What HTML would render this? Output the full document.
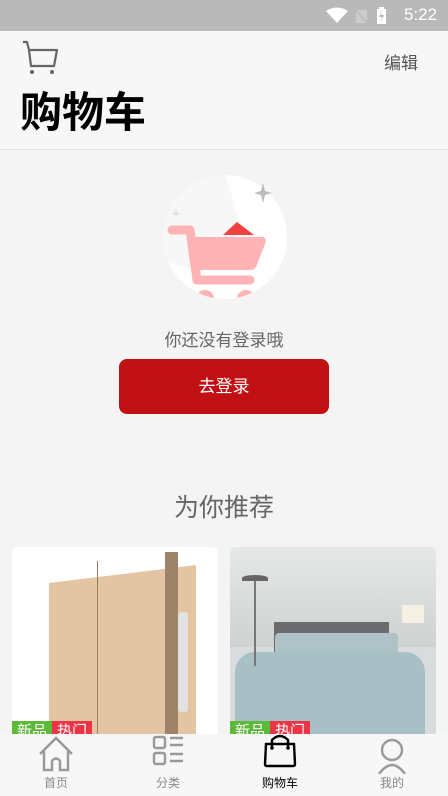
<!DOCTYPE html>
<html><head><meta charset="utf-8"><style>
*{margin:0;padding:0;box-sizing:border-box}
body{width:448px;height:796px;overflow:hidden;background:#f4f4f4;font-family:"Liberation Sans","Noto Sans CJK SC",sans-serif;position:relative}
.abs{position:absolute}
</style></head><body>
<div class="abs" style="left:0;top:0;width:448px;height:31px;background:#b9b9b9"></div>
<svg class="abs" style="left:320px;top:5px" width="120" height="22" viewBox="0 0 120 22">
<path d="M6 6 Q17 -1 28 6 L17 18 Z" fill="#fff"/>
<rect x="36" y="5" width="11" height="13" fill="#ccc"/><line x1="35" y1="4" x2="48" y2="19" stroke="#b9b9b9" stroke-width="1.5"/>
<rect x="57" y="4" width="9" height="15" fill="#fff"/><rect x="59" y="2" width="5" height="2" fill="#fff"/><path d="M62 6 L59 12 L62 12 L61 17 L64 10 L61 10 Z" fill="#b9b9b9"/>
</svg>
<div class="abs" style="left:404px;top:5px;color:#fff;font-size:17px">5:22</div>
<div class="abs" style="left:0;top:31px;width:448px;height:119px;background:#f7f7f7;border-bottom:1px solid #e2e2e2"></div>
<svg class="abs" style="left:20px;top:40px" width="40" height="36" viewBox="0 0 40 36">
<path d="M3 2 L7 2 L9 10 L11 26 L34 26 L37 10 L9 10" fill="none" stroke="#666" stroke-width="2.2" stroke-linejoin="round"/>
<circle cx="12" cy="32" r="2" fill="#666"/><circle cx="32" cy="32" r="2" fill="#666"/></svg>
<div class="abs" style="left:384px;top:49px;font-size:17px;color:#555">编辑</div>
<div class="abs" style="left:20px;top:88px;font-size:42px;font-weight:bold;color:#000;line-height:50px">购物车</div>
<svg class="abs" style="left:150px;top:165px" width="150" height="140" viewBox="0 0 150 140">
<defs><clipPath id="c"><circle cx="75" cy="72" r="62"/></clipPath></defs>
<circle cx="75" cy="72" r="62" fill="#fff"/>
<path d="M113 18 L115 26 L122 28 L115 30 L113 38 L111 30 L104 28 L111 26Z" fill="#bbb"/>
<path d="M26 43 L27 47 L31 49 L27 50 L26 54 L25 50 L21 49 L25 47Z" fill="#bbb"/>
<g clip-path="url(#c)">
<path d="M75 10 A62 62 0 0 0 16 95 Q40 110 75 98 Q95 70 85 45 Q80 20 75 10Z" fill="#f4f4f4" opacity="0.7"/>
<path d="M73 70 L87 57 L104 70Z" fill="#f04040"/>
<path d="M22 65 L40 65 L47 115 L100 115" fill="none" stroke="#ffb3b5" stroke-width="9" stroke-linecap="round" stroke-linejoin="round"/>
<path d="M42 72 L113 72 Q117 73 115 79 L106 102 Q104 105 100 105 L46 105Z" fill="#ffb3b5"/>
<circle cx="55" cy="134" r="9" fill="#ffb3b5"/><circle cx="96" cy="134" r="9" fill="#ffb3b5"/>
</g>
</svg>
<div class="abs" style="left:0;top:326px;width:448px;text-align:center;font-size:17px;color:#666">你还没有登录哦</div>
<div class="abs" style="left:119px;top:359px;width:210px;height:55px;background:#c01014;border-radius:8px;color:#fff;font-size:17px;text-align:center;line-height:55px">去登录</div>
<div class="abs" style="left:0;top:488px;width:448px;text-align:center;font-size:25px;color:#666">为你推荐</div>
<div class="abs" style="left:12px;top:547px;width:206px;height:200px;background:#fff;border-radius:6px;overflow:hidden">
<div class="abs" style="left:37px;top:18px;width:147px;height:180px;background:#e3c4a3;transform:skewY(-7deg);transform-origin:right top"></div>
<div class="abs" style="left:85px;top:14px;width:1px;height:180px;background:#9a7d60"></div>
<div class="abs" style="left:153px;top:5px;width:13px;height:190px;background:#9e8368"></div>
<div class="abs" style="left:166px;top:65px;width:10px;height:100px;background:#e2e2e2;border-radius:3px"></div>
</div>
<div class="abs" style="left:230px;top:547px;width:206px;height:200px;background:#d9dcdc;border-radius:6px;overflow:hidden">
<div class="abs" style="left:0;top:0;width:206px;height:100px;background:linear-gradient(#e6e8e8,#cfd2d2)"></div>
<div class="abs" style="left:44px;top:75px;width:115px;height:30px;background:#6c6c6e"></div>
<div class="abs" style="left:45px;top:86px;width:123px;height:25px;background:#aec2c8;border-radius:4px"></div>
<div class="abs" style="left:5px;top:105px;width:190px;height:100px;background:#a8bfc6;border-radius:20px 20px 0 0"></div>
<div class="abs" style="left:12px;top:28px;width:26px;height:6px;background:#666;border-radius:50% 50% 0 0"></div>
<div class="abs" style="left:24px;top:34px;width:2px;height:85px;background:#777"></div>
<div class="abs" style="left:172px;top:58px;width:22px;height:18px;background:#f4f0e4"></div>
</div>
<div class="abs" style="left:12px;top:721px;width:40px;height:20px;background:#5db93a;color:#fff;font-size:15px;text-align:center;line-height:22px">新品</div>
<div class="abs" style="left:52px;top:721px;width:40px;height:20px;background:#ec3447;color:#fff;font-size:15px;text-align:center;line-height:22px">热门</div>
<div class="abs" style="left:230px;top:721px;width:40px;height:20px;background:#5db93a;color:#fff;font-size:15px;text-align:center;line-height:22px">新品</div>
<div class="abs" style="left:270px;top:721px;width:40px;height:20px;background:#ec3447;color:#fff;font-size:15px;text-align:center;line-height:22px">热门</div>
<div class="abs" style="left:0;top:734px;width:448px;height:62px;background:#f7f7f7"></div>
<svg class="abs" style="left:0;top:734px" width="448" height="40" viewBox="0 0 448 40">
<g fill="none" stroke="#999" stroke-width="2.4">
<path d="M40 20 L56 4 L72 20 M44 17 L44 36 L52 36 L52 27 Q56 22 60 27 L60 36 L68 36 L68 17"/>
<rect x="154" y="3" width="11" height="11" rx="2"/><rect x="154" y="19" width="11" height="11" rx="2"/>
<path d="M170 4 L183 4 M170 11 L183 11 M170 20 L183 20 M170 27 L183 27"/>
<circle cx="392" cy="16" r="10"/><path d="M379 40 Q392 22 405 40"/>
</g>
<g fill="none" stroke="#000" stroke-width="2.4"><path d="M266 10 L294 10 L295 30 Q295 32 293 32 L267 32 Q265 32 265 30 Z"/><path d="M272 14 L272 6 Q280 -2 288 6 L288 14"/></g>
<circle cx="272" cy="14" r="1.8" fill="#000"/><circle cx="288" cy="14" r="1.8" fill="#000"/>
</svg>
<div class="abs" style="left:26px;top:774px;width:60px;text-align:center;font-size:12px;color:#888">首页</div>
<div class="abs" style="left:138px;top:774px;width:60px;text-align:center;font-size:12px;color:#888">分类</div>
<div class="abs" style="left:250px;top:774px;width:60px;text-align:center;font-size:12px;color:#000">购物车</div>
<div class="abs" style="left:362px;top:774px;width:60px;text-align:center;font-size:12px;color:#888">我的</div>
</body></html>
